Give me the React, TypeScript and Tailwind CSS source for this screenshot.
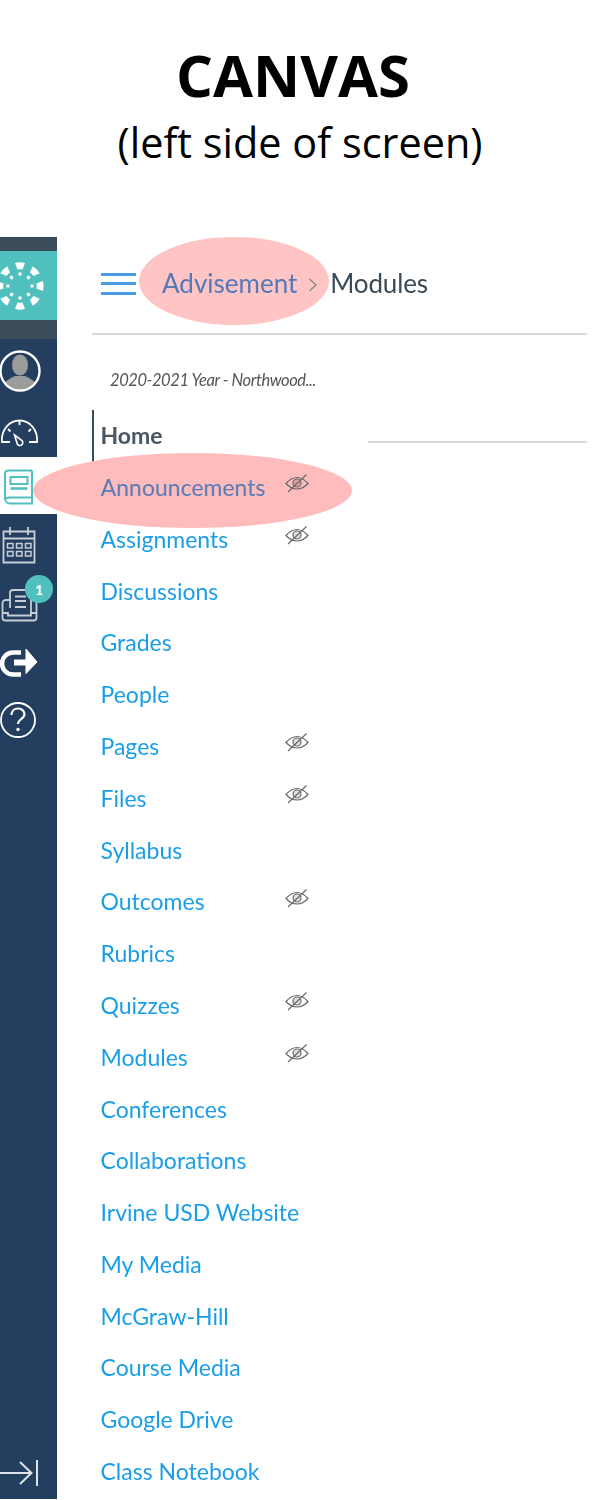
import React from "react";

const links = [
  { label: "Announcements", hidden: true, active: true },
  { label: "Assignments", hidden: true },
  { label: "Discussions" },
  { label: "Grades" },
  { label: "People" },
  { label: "Pages", hidden: true },
  { label: "Files", hidden: true },
  { label: "Syllabus" },
  { label: "Outcomes", hidden: true },
  { label: "Rubrics" },
  { label: "Quizzes", hidden: true },
  { label: "Modules", hidden: true },
  { label: "Conferences" },
  { label: "Collaborations" },
  { label: "Irvine USD Website" },
  { label: "My Media" },
  { label: "McGraw-Hill" },
  { label: "Course Media" },
  { label: "Google Drive" },
  { label: "Class Notebook" },
];

function EyeOff() {
  return (
    <svg width="24" height="24" viewBox="0 0 24 24" fill="none" stroke="#6a6a6a" strokeWidth="1.200" className="-mt-2">
      <path d="M1 12.500C5 8 9 6.500 12 6.500s7 1.500 11 6c-4 4.500-8 5.500-11 5.500s-7-1-11-5.500z" />
      <circle cx="12" cy="12" r="4" fill="#00000022" />
      <path d="M3 21 21.500 3.500" />
    </svg>
  );
}

function CanvasLogo() {
  const angles = [0, 45, 90, 135, 180, 225, 270, 315];
  return (
    <svg width="57" height="69" viewBox="0 0 57 69" fill="#fff">
      {angles.map((a) => (
        <g key={a} transform={`rotate(${a} 20 35)`}>
          <path d="M15 12Q20 10.700 25 12L22.500 18.500Q20 18 17.500 18.500z" />
          <circle cx="20" cy="23" r="1.800" />
        </g>
      ))}
    </svg>
  );
}

function Sidebar() {
  return (
    <div className="flex h-[1262px] w-[57px] shrink-0 flex-col bg-[#233e5f]">
      <div className="h-[14px] bg-[#3b4b58]" />
      <div className="h-[69px] bg-[#4fc0bd]">
        <CanvasLogo />
      </div>
      <div className="h-[19px] bg-[#3b4b58]" />

      {/* avatar */}
      <div className="h-[64px]">
        <svg width="57" height="64" viewBox="0 0 57 64">
          <clipPath id="avatar-clip">
            <circle cx="20" cy="32" r="18.500" />
          </clipPath>
          <g clipPath="url(#avatar-clip)" fill="#9b9b9b">
            <ellipse cx="20" cy="26" rx="8" ry="10.500" />
            <path d="M1 52c0-8 8-12 14-15h10c6 3 14 7 14 15z" />
          </g>
          <circle cx="20" cy="32" r="19.500" fill="none" stroke="#fff" strokeWidth="2.400" />
        </svg>
      </div>

      {/* dashboard */}
      <div className="h-[54px]">
        <svg width="57" height="54" viewBox="0 0 57 54" fill="none" stroke="#fff" strokeWidth="1.800">
          <path d="M10 39H2C1 27 9 17.500 19.500 17.500S38 27 37 39h-8" />
          <path d="M19.500 18v4M8 26l2.500 2.500M31 26l-2.500 2.500" />
          <path d="M14.500 32l7.500 5.500a3 3 0 0 1-4.500 4z" strokeWidth="1.600" />
        </svg>
      </div>

      {/* courses, the active item */}
      <div className="h-[57px] bg-white">
        <svg width="57" height="57" viewBox="0 0 57 57" fill="none" stroke="#4fc0bd" strokeWidth="2">
          <path d="M32 13.500H8.500c-2 0-3.500 1-3.500 3.500v24c0 3 2 5.500 5 5.500h22v-6H10c-3 0-5 1-5 3" />
          <path d="M32 13.500v26.500" />
          <rect x="10.500" y="20" width="17" height="7" />
          <path d="M10.500 31.500h17" strokeWidth="2.600" />
        </svg>
      </div>

      {/* calendar */}
      <div className="h-[58px]">
        <svg width="57" height="58" viewBox="0 0 57 58" fill="none" stroke="#c8ced6" strokeWidth="1.800">
          <path d="M3.500 17.500h31v31h-31zM3.500 24.500h31M10 13v8M28 13v8" />
          <path strokeWidth="1.500" d="M7.500 29.500H13V34H7.500zM16.500 29.500H22V34h-5.500zM25.500 29.500H31V34h-5.500zM7.500 37.500H13V42H7.500zM16.500 37.500H22V42h-5.500zM25.500 37.500H31V42h-5.500z" />
        </svg>
      </div>

      {/* inbox */}
      <div className="relative h-[58px]">
        <svg width="57" height="58" viewBox="0 0 57 58" fill="none" stroke="#c8ced6" strokeWidth="1.800">
          <path d="M10 36V21c0-2 1-3 3-3h16l2 2v22" />
          <path d="M15 24.500h11M15 29h11M15 35h11" />
          <path d="M10 28H6c-3 0-3.500 2-3.500 3.500V46c0 2 1 2.500 3 2.500h28c2 0 3-.500 3-2.500V31c0-2-1-3-3-3h-3" />
          <path d="M3 41h5v2.500h23V41h6" />
        </svg>
        <span className="absolute left-[25px] top-[3px] flex h-[28px] w-[28px] items-center justify-center rounded-full bg-[#4fc0bd] text-[14px] font-bold text-white">
          1
        </span>
      </div>

      {/* sign out */}
      <div className="h-[60px]">
        <svg width="57" height="60" viewBox="0 0 57 60" fill="none" stroke="#fff">
          <path d="M21 22.500h-8a10.500 10.500 0 0 0 0 22h8" strokeWidth="4.500" />
          <path d="M14 32.500h13" strokeWidth="6" />
          <path d="M26 19 37 32 26 43.500z" fill="#fff" strokeWidth="1" />
        </svg>
      </div>

      {/* help */}
      <div className="h-[60px]">
        <svg width="57" height="60" viewBox="0 0 57 60" fill="none" stroke="#fff" strokeWidth="1.800">
          <circle cx="18" cy="30" r="17" />
          <path d="M11.500 25c0-4 3-6.500 6.500-6.500s6.500 2.500 6.500 5.500c0 5-6.500 5-6.500 10" strokeWidth="2.200" />
          <circle cx="18" cy="39.500" r="1.700" fill="#fff" stroke="none" />
        </svg>
      </div>

      <div className="mt-auto h-[40px]">
        <svg width="57" height="40" viewBox="0 0 57 40" fill="none" stroke="#dfe3e7" strokeWidth="2">
          <path d="M0 14h31M20 3l11.500 11L20 25M37 1v26" />
        </svg>
      </div>
    </div>
  );
}

export default function App() {
  return (
    <div className="relative h-[1500px] w-[600px] overflow-hidden bg-white">
      <header className="h-[237px] pt-[37px] text-center font-['Open_Sans',sans-serif] text-black">
        <h1 className="pr-[14px] text-[58px] font-bold leading-[76px]">CANVAS</h1>
        <p className="text-[41.400px] leading-[59px]">(left side of screen)</p>
      </header>

      <div className="flex font-['Lato',sans-serif] blur-[0.4px]">
        <Sidebar />

        <main className="relative ml-[35px] w-[495px]">
          <div className="relative flex h-[98px] items-center border-b-2 border-[#d7dbe0] pb-[3px] pl-[9px] text-[26px]">
            <span className="absolute left-[47px] top-0 h-[88px] w-[190px] rounded-[50%] bg-[#ffc4c4]" />
            <span className="relative flex h-[22px] w-[35px] flex-col justify-between">
              <i className="block h-[3px] bg-[#4a9be8]" />
              <i className="block h-[3px] bg-[#4a9be8]" />
              <i className="block h-[3px] bg-[#4a9be8]" />
            </span>
            <span className="relative ml-[26px] text-[#5479b8]">Advisement</span>
            <svg width="10" height="16" viewBox="0 0 10 16" fill="none" stroke="#8f8a90" strokeWidth="1.500" className="relative ml-[11px] mt-[3px]">
              <path d="M1.500 2 8 8l-6.500 6" />
            </svg>
            <span className="relative ml-[12px] tracking-[-0.15px] text-[#3a4a56]">Modules</span>
          </div>

          <div className="flex h-[75px] items-center pl-[18px] pt-[15px] text-[16.500px] italic tracking-[-0.42px] text-[#555]">
            2020-2021 Year - Northwood...
          </div>

          <div className="flex">
            <nav className="w-[276px] text-[23px]">
              <div className="flex h-[51.800px] items-center border-l-2 border-[#3b4b58] pb-[1px] pl-[6.500px] font-bold text-[#4a5661]">
                Home
              </div>
              {links.map((link) => (
                <div key={link.label} className="relative flex h-[51.800px] items-center pb-[1px] pl-[8.500px]">
                  {link.active && (
                    <span className="absolute left-[-59px] top-[-9px] h-[75px] w-[319px] rounded-[50%] bg-[#ffbcbc]" />
                  )}
                  <span className={`relative w-[184.500px] whitespace-nowrap ${link.active ? "text-[#5a7cb8]" : "text-[#1b9ee8]"}`}>
                    {link.label}
                  </span>
                  {link.hidden && (
                    <span className="relative">
                      <EyeOff />
                    </span>
                  )}
                </div>
              ))}
            </nav>
            <div className="mt-[31px] h-[2px] flex-1 bg-[#d7dbe0]" />
          </div>
        </main>
      </div>
    </div>
  );
}
